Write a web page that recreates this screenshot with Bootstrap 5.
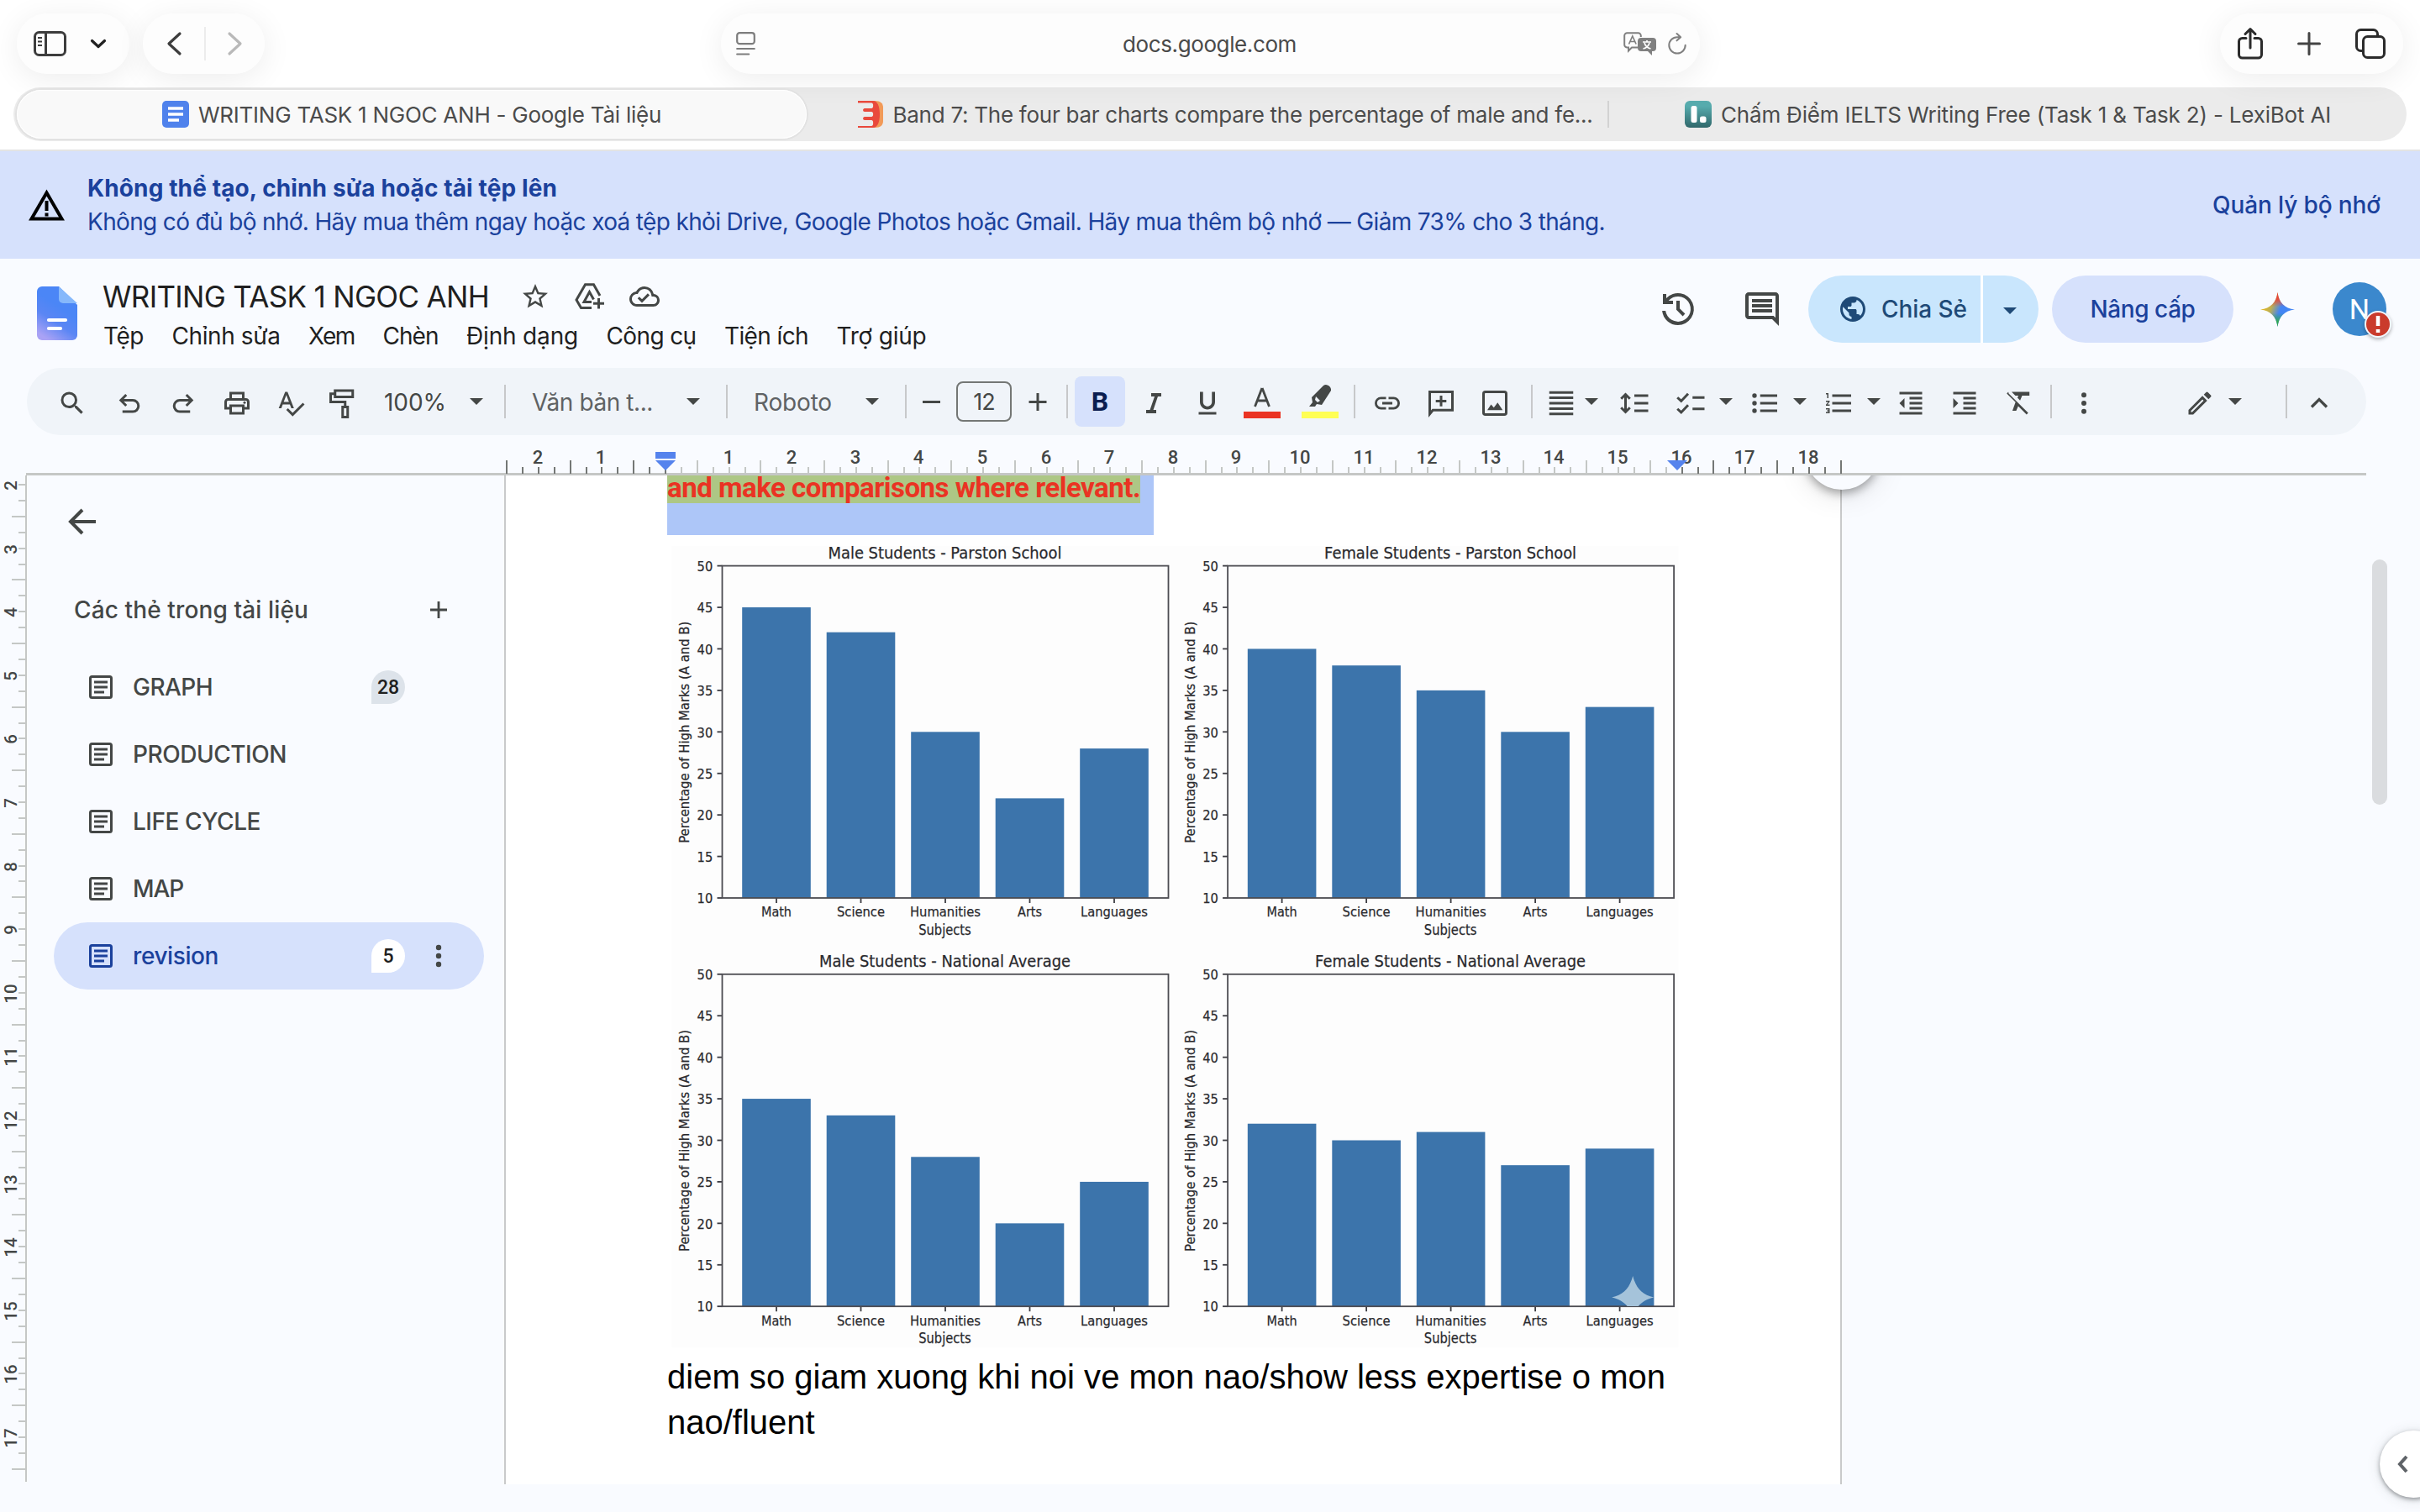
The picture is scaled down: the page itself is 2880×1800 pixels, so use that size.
<!DOCTYPE html>
<html lang="vi">
<head>
  <meta charset="UTF-8" />
  <meta name="viewport" content="width=device-width, initial-scale=1.0"/>
  <title>WRITING TASK 1 NGOC ANH - Google Tài liệu</title>
  <link href="https://cdn.jsdelivr.net/npm/bootstrap@5.3.2/dist/css/bootstrap.min.css" rel="stylesheet">
  <style>
    body { width: 2880px; height: 1800px; overflow: hidden; background: #f9fbff; color: #1f1f1f; font-family: Inter, Roboto, sans-serif; font-size: 28px; line-height: 1; }
    svg { display: block; flex: none; overflow: visible; }
    [data-w] { white-space: nowrap; flex: none; }
    .half-bold { font-weight: 500; }

    /* Safari */
    .chrome { height: 180px; background: #fff; border-bottom: 2px solid #e3e4e4; }
    .bar-top { height: 104px; padding: 16px 20px 16px; }
    .pill { height: 72px; background: #fdfdfd; border-radius: 36px; box-shadow: 0 6px 36px rgba(0,0,0,.075), inset 0 0 2px #fff; color: #2b2b2b; }
    .pill-side { width: 134px; padding: 0 28px 0 20px; }
    .pill-nav { width: 145px; padding: 0 27px 0 29px; margin-left: 16px; }
    .pill-nav i { width: 2px; height: 40px; background: #ececec; }
    .pill-url { width: 1165px; margin-left: 543px; padding: 0 15px 0 18px; color: #4a4a4a; font-size: 26px; }
    .pill-url span { padding-top: 2px; }
    .pill-right { width: 218px; margin-left: 619px; padding: 0 21px; }
    .tab-strip { height: 64px; margin: 0 16px; border-radius: 32px; background: #ebebeb; padding: 0 0 0 4px; font-size: 26px; color: #4b4b4b; }
    .tab-strip span { padding-top: 2px; }
    .tab-one { width: 940px; height: 58px; border-radius: 29px; background: #f9f9f9; box-shadow: 0 0 0 2px #e2e2e2, inset 0 0 0 1px #fff; gap: 11px; }
    .tab-two { width: 955px; gap: 12px; padding-left: 43px; height: 32px; border-right: 2px solid #d2d2d2; }
    .tab-three { width: 949px; gap: 11px; }

    /* thông báo bộ nhớ */
    .notice { height: 128px; background: #d6e1fc; color: #1b419c; padding: 0 47px 0 34px; }
    .notice-text { margin-left: 27px; gap: 12px; }

    /* đầu trang */
    .docs-head { height: 130px; padding: 0 40px 0 44px; }
    .head-names { padding-top: 23px; margin-left: 30px; }
    .doc-title { font-size: 35px; gap: 29px; height: 44px; color: #1f1f1f; }
    .menu-row { gap: 33.5px; height: 34px; margin-top: 8px; margin-left: 1px; }
    .head-right { height: 120px; }
    .icon-dark { color: #444746; }
    .share { height: 80px; width: 274px; border-radius: 40px; background: #c9e6fd; color: #1f4a77; margin-left: 31px; }
    .share-main { width: 208px; height: 80px; padding-left: 38px; gap: 19px; border-right: 3px solid #fff; }
    .share-more { width: 66px; padding-left: 24px; }
    .upgrade { width: 216px; height: 80px; border-radius: 40px; background: #d6e1fc; color: #1b419c; margin-left: 16px; }
    .avatar { width: 64px; height: 64px; border-radius: 50%; background: #3b88cd; color: #fff; font: 34px Roboto, sans-serif; position: relative; margin-left: 45px; }
    .avatar-alert { position: absolute; left: 38px; top: 34px; width: 32px; height: 32px; border-radius: 50%; border: 2px solid #f2f6fc; background: #ca3b2c; box-shadow: 0 2px 4px rgba(0,0,0,.3); }

    /* thanh công cụ */
    .tools { height: 80px; margin: 0 64px 0 32px; border-radius: 40px; background: #f0f4f9; padding: 0 38px 0 8px; color: #444746; }
    .tools > * { margin-left: 28px; flex: none; }
    .tools > span { padding-top: 2px; }
    .tools svg.ic { width: 36px; height: 36px; margin-top: 4px; }
    .tools .dv { width: 2px; height: 40px; background: #c7c8ca; }
    .caret { width: 16px; height: 8px; background: currentColor; clip-path: polygon(0 0, 100% 0, 50% 100%); }
    .muted { color: #5f6264; }
    .size-box { width: 66px; height: 48px; border: 2px solid #747775; border-radius: 8px; font-size: 27px; letter-spacing: -1px; }
    .bold-on { width: 60px; height: 60px; border-radius: 8px; background: #d6e1fc; color: #0b1d4f; font: 700 32px Roboto, sans-serif; }
    .tools .g8 { margin-left: 8px; }   .tools .g10 { margin-left: 10px; }
    .tools .g13 { margin-left: 13px; } .tools .g16 { margin-left: 16px; }
    .tools .g18 { margin-left: 18px; } .tools .g20 { margin-left: 20px; }
    .tools .g25 { margin-left: 25px; } .tools .g31 { margin-left: 31px; }
    .tools .g32 { margin-left: 32px; } .tools .g40 { margin-left: 40px; }
    .tools .g52 { margin-left: 52px; }

    /* thước và vùng soạn thảo */
    .ruler-h { height: 48px; margin: 0 64px 0 31px; border-bottom: 3px solid #c5c7c6; }
    svg text { font-family: Roboto, sans-serif; }
    .ruler-h text, .ruler-v text { font-weight: 500; fill: #444746; text-anchor: middle; }
    .ruler-h text { font-size: 22px; }
    .ruler-v text { font-size: 20.5px; }
    .work { height: 1234px; position: relative; }
    .ruler-v { width: 32px; height: 1198px; border-right: 2px solid #c5c7c6; }
    .outline { width: 568px; color: #444746; font-weight: 500; }
    .outline-back { padding: 38px 0 0 48px; height: 128px; }
    .outline-head { height: 64px; padding: 0 44px 0 56px; }
    .outline-plus { margin-right: 24px; }
    .outline-list { padding: 20px 24px 0 32px; }
    .outline-item { height: 80px; border-radius: 40px; padding: 0 50px 0 42px; }
    .outline-item.on { background: #d6e1fc; color: #1b419c; }
    .outline-item svg { margin-right: 24px; }
    .count { width: 40px; height: 40px; border-radius: 20px 20px 20px 0; background: #dde3ea; color: #1f1f1f; font: 500 23px Roboto, sans-serif; margin-left: auto; margin-right: 44px; }
    .on .count { background: #fff; margin-right: 36px; }
    .outline-item.on svg.dots { margin-right: 0; color: #444746; }
    .paper { width: 1592px; height: 1201px; background: #fff; border: solid #c9cacb; border-width: 0 2px; padding-left: 192px; overflow: hidden; }
    .sel { width: 579px; height: 71px; background: #adc6f8; }
    .sel span { display: block; width: 563px; height: 33px; background: #adc785; color: #ea3323; font: 700 33px/29px Roboto, sans-serif; }
    .figure-box { width: 1206px; height: 976px; }
    .figure-box text { font-family: "DejaVu Sans", sans-serif; fill: #2a2a2e; stroke: #2a2a2e; stroke-width: .25; }
    .note-text { font: 40px/53.7px "Liberation Sans", Arial, sans-serif; color: #000; }
    .peek { position: absolute; left: 2051px; top: 0; width: 280px; height: 90px; overflow: hidden; }
    .peek span { position: absolute; left: 97px; top: -71px; width: 88px; height: 88px; border-radius: 50%; background: #f9fbff; box-shadow: 0 4px 12px rgba(0,0,0,.35), 0 4px 36px rgba(0,0,0,.13); }
    .scroll-thumb { width: 18px; height: 292px; margin: 100px 0 0 631px; border-radius: 9px; background: #dadcdf; }
    .side-tab { position: absolute; left: 2832px; top: 1137px; width: 80px; height: 80px; border-radius: 40px; background: #fff; box-shadow: 0 2px 5px rgba(60,64,67,.5), 0 2px 16px rgba(60,64,67,.15); padding-left: 19px; color: #5f6368; }
  </style>
</head>
<body class="d-flex flex-column">

  <header class="chrome flex-shrink-0">
    <div class="bar-top d-flex">
      <div class="pill pill-side d-flex align-items-center justify-content-between">
        <svg width="39" height="30" viewBox="0 0 39 30" fill="none" stroke="#3d3d3d" stroke-width="3"><rect x="1.5" y="1.5" width="36" height="27" rx="5"/><path d="M14.5 2v26"/><path d="M5 8h5M5 12.500h5M5 17h5" stroke-width="2"/></svg>
        <svg width="18" height="10" viewBox="0 0 18 10" fill="none" stroke="#222" stroke-width="3.200" stroke-linecap="round" stroke-linejoin="round"><path d="M1.500 1.500L9 8.500l7.500-7"/></svg>
      </div>
      <div class="pill pill-nav d-flex align-items-center justify-content-between">
        <svg width="17" height="28" viewBox="0 0 17 28" fill="none" stroke="#3d3d3d" stroke-width="3.200" stroke-linecap="round" stroke-linejoin="round"><path d="M15 2L2 14l13 12"/></svg>
        <i></i>
        <svg width="17" height="28" viewBox="0 0 17 28" fill="none" stroke="#b9b9b9" stroke-width="3.200" stroke-linecap="round" stroke-linejoin="round"><path d="M2 2l13 12L2 26"/></svg>
      </div>
      <div class="pill pill-url d-flex align-items-center">
        <svg width="23" height="28" viewBox="0 0 23 28" fill="none" stroke="#7d7d7d" stroke-width="2.200" stroke-linecap="round"><rect x="1.200" y="1.200" width="20.600" height="13" rx="3"/><path d="M1.200 20h20.600M1.200 26.500h14"/></svg>
        <span class="mx-auto ps-5" data-w="207">docs.google.com</span>
        <svg width="40" height="28" viewBox="0 0 40 28"><path d="M17 18.500h-7l-4 4v-4H4.500a3.300 3.300 0 0 1-3.300-3.300V4.500a3.300 3.300 0 0 1 3.300-3.300h13a3.300 3.300 0 0 1 3.300 3.300V6" fill="none" stroke="#808080" stroke-width="2"/><path d="M21 7h14a4 4 0 0 1 4 4v8a4 4 0 0 1-4 4h-1v5l-5-5h-8a4 4 0 0 1-4-4v-8a4 4 0 0 1 4-4z" fill="#808080"/><path d="M6.500 14.500L10.800 5l4.300 9.500M8 11.500h5.500" fill="none" stroke="#808080" stroke-width="1.700"/><path d="M23 12h10M28 10v2M25 13c1 4 4 6 7.500 7M31 13c-1 4-4 6-7.500 7" stroke="#fff" stroke-width="1.700" fill="none"/></svg>
        <svg class="ms-2 ps-1" width="28" height="28" viewBox="0 0 26 28" fill="none" stroke="#808080" stroke-width="2.200" stroke-linecap="round" stroke-linejoin="round"><path d="M23.500 16A10.500 10.500 0 1 1 13 5.500h4M12.500 1L17.500 5.500 12.500 10"/></svg>
      </div>
      <div class="pill pill-right d-flex align-items-center justify-content-between">
        <svg width="30" height="38" viewBox="0 0 30 38" fill="none" stroke="currentColor" stroke-width="3" stroke-linecap="round" stroke-linejoin="round"><path d="M10 12.500H5.500a4 4 0 0 0-4 4V32a4 4 0 0 0 4 4h19a4 4 0 0 0 4-4V16.500a4 4 0 0 0-4-4H20M15 24V2M9 7.500L15 1.500l6 6"/></svg>
        <svg width="28" height="28" viewBox="0 0 28 28" stroke="#444" stroke-width="3" stroke-linecap="round"><path d="M14 1.500v25M1.500 14h25"/></svg>
        <svg width="36" height="36" viewBox="0 0 36 36" fill="none" stroke="currentColor" stroke-width="3"><rect x="9.500" y="9.500" width="25" height="25" rx="5"/><path d="M9 26.500H6.500a5 5 0 0 1-5-5v-15a5 5 0 0 1 5-5h15a5 5 0 0 1 5 5V9"/></svg>
      </div>
    </div>
    <div class="tab-strip d-flex align-items-center">
      <div class="tab-one d-flex align-items-center justify-content-center">
        <svg width="32" height="32" viewBox="0 0 32 32"><rect width="32" height="32" rx="5" fill="#4f82ec"/><path d="M7 9h18M7 16h18M7 23h13" stroke="#fff" stroke-width="3.600"/></svg>
        <span data-w="551">WRITING TASK 1 NGOC ANH - Google Tài liệu</span>
      </div>
      <div class="tab-two d-flex align-items-center justify-content-center">
        <svg width="30" height="32" viewBox="0 0 30 32"><path d="M18 0h2c7 0 10 3 10 8v16c0 5-3 8-10 8h-2z" fill="#f29a58"/><path d="M0 0h18c5 0 8 6 8 16s-3 16-8 16H0v-2h16c3 0 3-7 0-7H8c-2.500 0-2.500-4 0-4h8c3 0 3-6 0-6H8c-2.500 0-2.500-4 0-4h8c3 0 3-6.500 0-6.500H0z" fill="#e9493c"/></svg>
        <span data-w="833">Band 7: The four bar charts compare the percentage of male and fe...</span>
      </div>
      <div class="tab-three d-flex align-items-center justify-content-center">
        <svg width="32" height="32" viewBox="0 0 32 32"><defs><linearGradient id="lx" x2="0" y2="1"><stop offset=".2" stop-color="#56abad"/><stop offset="1" stop-color="#30686b"/></linearGradient></defs><rect width="32" height="32" rx="6" fill="url(#lx)"/><rect x="7.500" y="6" width="7" height="20" rx="2.500" fill="#fff"/><rect x="18" y="18.500" width="7.500" height="7.500" rx="2.500" fill="#fff"/></svg>
        <span data-w="726">Chấm Điểm IELTS Writing Free (Task 1 &amp; Task 2) - LexiBot AI</span>
      </div>
    </div>
  </header>

  <section class="notice d-flex align-items-center flex-shrink-0">
    <svg width="43" height="38" viewBox="0 0 43 38"><path d="M21.500 4.500L39.500 35.500H3.500z" fill="none" stroke="#000" stroke-width="4"/><path d="M21.500 14v12M21.500 28.500v4" stroke="#000" stroke-width="4"/></svg>
    <div class="notice-text d-flex flex-column">
      <div><strong data-w="559">Không thể tạo, chỉnh sửa hoặc tải tệp lên</strong></div>
      <div><span data-w="1806">Không có đủ bộ nhớ. Hãy mua thêm ngay hoặc xoá tệp khỏi Drive, Google Photos hoặc Gmail. Hãy mua thêm bộ nhớ — Giảm 73% cho 3 tháng.</span></div>
    </div>
    <span class="ms-auto half-bold" data-w="200">Quản lý bộ nhớ</span>
  </section>

  <section class="docs-head d-flex flex-shrink-0">
    <svg class="mt-auto mb-auto" width="48" height="64" viewBox="0 0 48 64"><defs><linearGradient id="dg" x1=".6" y1=".4" x2=".3" y2="1"><stop offset="0" stop-color="#4b86f6"/><stop offset=".45" stop-color="#5b86f4"/><stop offset="1" stop-color="#a9a2f5"/></linearGradient></defs><path d="M6 0h20l22 22v36a6 6 0 0 1-6 6H6a6 6 0 0 1-6-6V6a6 6 0 0 1 6-6z" fill="url(#dg)"/><path d="M26 0l22 20H31a5 5 0 0 1-5-5z" fill="#86b8fb"/><path d="M14 40h20M14 50h14" stroke="#fff" stroke-width="4.200" stroke-linecap="round"/></svg>
    <div class="head-names">
      <div class="doc-title d-flex align-items-center">
        <span data-w="460">WRITING TASK 1 NGOC ANH</span>
        <svg class="icon-dark ms-2" width="36" height="36" viewBox="0 0 24 24" fill="currentColor"><path d="M22 9.240l-7.190-.62L12 2 9.190 8.630 2 9.240l5.460 4.730L5.820 21 12 17.270 18.180 21l-1.630-7.030L22 9.240zM12 15.400l-3.760 2.270 1-4.280-3.320-2.880 4.380-.38L12 6.100l1.710 4.040 4.380.38-3.320 2.880 1 4.280L12 15.400z"/></svg>
        <svg class="icon-dark" width="36" height="32" viewBox="0 0 36 32" fill="none" stroke="currentColor" stroke-width="3"><path d="M20 29.500H7.500L2 20 12.500 1.800h10L30 15"/><path d="M20 22.500H11l6.500-12 5 9"/><path d="M28.500 18v12.500M22 24.300h13"/></svg>
        <svg class="icon-dark" width="36" height="36" viewBox="0 0 24 24" fill="currentColor"><path d="M19.350 10.040A7.490 7.490 0 0 0 12 4C9.110 4 6.600 5.640 5.350 8.040A5.994 5.994 0 0 0 0 14c0 3.310 2.690 6 6 6h13c2.760 0 5-2.240 5-5 0-2.640-2.050-4.780-4.650-4.960zM19 18H6c-2.210 0-4-1.790-4-4 0-2.050 1.530-3.760 3.560-3.970l1.070-.11.500-.95A5.469 5.469 0 0 1 12 6c2.620 0 4.880 1.860 5.390 4.430l.3 1.500 1.530.11A2.980 2.980 0 0 1 22 15c0 1.650-1.350 3-3 3zm-9-3.820l-2.090-2.090L6.500 13.500 10 17l6.010-6.010-1.410-1.410z"/></svg>
      </div>
      <nav class="menu-row d-flex align-items-center">
        <span data-w="48">Tệp</span><span data-w="129">Chỉnh sửa</span><span data-w="55">Xem</span><span data-w="66">Chèn</span><span data-w="133">Định dạng</span><span data-w="107">Công cụ</span><span data-w="100">Tiện ích</span><span data-w="107">Trợ giúp</span>
      </nav>
    </div>
    <div class="head-right ms-auto d-flex align-items-center">
      <svg class="icon-dark" width="48" height="48" viewBox="0 0 24 24" fill="currentColor"><path d="M12 21.500a9.500 9.500 0 0 1-9.450-8.500h2.020A7.500 7.500 0 1 0 6.350 7H9v2H3V3h2v2.500A9.500 9.500 0 1 1 12 21.500zm2.800-5.300L11 12.400V7h2v4.600l3.200 3.200z"/></svg>
      <svg class="icon-dark ms-5 ps-1" width="52" height="48" viewBox="0 0 24 24" fill="currentColor"><path d="M21.990 4c0-1.100-.89-2-1.990-2H4c-1.100 0-2 .9-2 2v12c0 1.100.9 2 2 2h14l4 4-.01-18zM20 4v13.170L18.830 16H4V4h16zM6 12h12v2H6zm0-3h12v2H6zm0-3h12v2H6z"/></svg>
      <div class="share d-flex align-items-center">
        <div class="share-main d-flex align-items-center">
          <svg width="30" height="30" viewBox="2 2 20 20" fill="currentColor"><path d="M12 2C6.480 2 2 6.480 2 12s4.480 10 10 10 10-4.480 10-10S17.520 2 12 2zm-1 17.930c-3.950-.49-7-3.850-7-7.930 0-.62.08-1.210.21-1.790L9 15v1c0 1.100.9 2 2 2v1.930zm6.900-2.540c-.26-.81-1-1.390-1.900-1.390h-1v-3c0-.55-.45-1-1-1H8v-2h2c.55 0 1-.45 1-1V7h2c1.100 0 2-.9 2-2v-.41c2.930 1.190 5 4.060 5 7.410 0 2.080-.8 3.970-2.100 5.390z"/></svg>
          <span class="half-bold" data-w="102">Chia Sẻ</span>
        </div>
        <div class="share-more"><div class="caret mt-1"></div></div>
      </div>
      <div class="upgrade d-flex align-items-center justify-content-center"><span class="half-bold" data-w="125">Nâng cấp</span></div>
      <svg class="ms-4 ps-2" width="49" height="41" viewBox="0 0 40 40"><defs><linearGradient id="gm1" x1="0" y1=".2" x2="1" y2=".6"><stop offset="0" stop-color="#fbbc04"/><stop offset=".35" stop-color="#c0b050"/><stop offset=".6" stop-color="#4285f4"/><stop offset="1" stop-color="#4285f4"/></linearGradient><linearGradient id="gm2" x1="0" y1="0" x2="0" y2="1"><stop offset="0" stop-color="#ea4335"/><stop offset=".2" stop-color="#ea4335" stop-opacity=".9"/><stop offset=".42" stop-color="#ea4335" stop-opacity="0"/><stop offset=".6" stop-color="#34a853" stop-opacity="0"/><stop offset=".85" stop-color="#34a853"/></linearGradient></defs><path d="M20 0c1.500 12 8 18.500 20 20-12 1.500-18.500 8-20 20-1.500-12-8-18.500-20-20 12-1.500 18.500-8 20-20z" fill="url(#gm1)"/><path d="M20 0c1.500 12 8 18.500 20 20-12 1.500-18.500 8-20 20-1.500-12-8-18.500-20-20 12-1.500 18.500-8 20-20z" fill="url(#gm2)"/></svg>
      <div class="avatar d-flex align-items-center justify-content-center">N
        <div class="avatar-alert"><svg width="28" height="28" viewBox="0 0 28 28"><path d="M14 4v12M14 20v4" stroke="#fff" stroke-width="4.500"/></svg></div>
      </div>
    </div>
  </section>

  <section class="tools d-flex align-items-center flex-shrink-0">
    <svg class="ic" viewBox="0 0 24 24" fill="currentColor"><path d="M15.500 14h-.79l-.28-.27A6.471 6.471 0 0 0 16 9.500 6.500 6.500 0 1 0 9.500 16c1.610 0 3.090-.59 4.230-1.570l.27.28v.79l5 4.990L20.490 19l-4.990-5zm-6 0C7.010 14 5 11.990 5 9.500S7.010 5 9.500 5 14 7.010 14 9.500 11.990 14 9.500 14z"/></svg>
    <svg class="ic g32" viewBox="0 0 24 24" fill="none" stroke="currentColor" stroke-width="2"><path d="M6.500 18.700h8.200a4.500 4.500 0 0 0 0-9H5.500M9.500 5.300L5.200 9.700l4.300 4.300"/></svg>
    <svg class="ic" viewBox="0 0 24 24" fill="none" stroke="currentColor" stroke-width="2"><path d="M17.500 18.700H9.300a4.500 4.500 0 0 1 0-9h9.200M14.500 5.300l4.300 4.400-4.300 4.300"/></svg>
    <svg class="ic" viewBox="0 0 24 24" fill="currentColor"><path d="M19 8h-1V3H6v5H5c-1.660 0-3 1.340-3 3v6h4v4h12v-4h4v-6c0-1.660-1.340-3-3-3zM8 5h8v3H8V5zm8 12v2H8v-4h8v2zm2-2v-2H6v2H4v-4c0-.55.45-1 1-1h14c.55 0 1 .45 1 1v4h-2z"/><circle cx="18" cy="11.500" r="1"/></svg>
    <svg class="ic" viewBox="0 0 24 24" fill="currentColor"><path d="M12.450 16h2.090L9.430 3H7.570L2.460 16h2.090l1.120-3h5.640l1.140 3zm-6.020-5L8.500 5.480 10.570 11H6.430zm15.160.590l-8.090 8.090L9.830 16l-1.410 1.410 5.090 5.090L23 13l-1.410-1.410z"/></svg>
    <svg class="ic g25" viewBox="0 0 24 24" fill="none" stroke="currentColor" stroke-width="2"><path d="M6.500 2h14v5h-14zM6.500 4.500H3V11h11.500v4M12.500 15h4v8h-4z"/></svg>
    <span class="g32" data-w="74">100%</span>
    <div class="caret"></div>
    <div class="dv g25"></div>
    <span class="g31 muted" data-w="144">Văn bản t...</span>
    <div class="caret g40"></div>
    <div class="dv g31"></div>
    <span class="g31 muted" data-w="93">Roboto</span>
    <div class="caret g40"></div>
    <div class="dv g31"></div>
    <svg class="ic g13" viewBox="0 0 24 24" stroke="currentColor" stroke-width="2"><path d="M4 11h14"/></svg>
    <div class="size-box g10 d-flex align-items-center justify-content-center">12</div>
    <svg class="ic g13" viewBox="0 0 24 24" stroke="currentColor" stroke-width="2"><path d="M5 11h14M12 4v14"/></svg>
    <div class="dv g16"></div>
    <div class="bold-on g8 d-flex align-items-center justify-content-center">B</div>
    <svg class="ic g16" viewBox="0 0 24 24" fill="currentColor"><path d="M10 4v2.700h2.700L9 17.300H6V20h8v-2.700h-2.300L15.300 6.700H18V4z"/></svg>
    <svg class="ic" viewBox="0 0 24 24" fill="currentColor"><path d="M12 17c3.310 0 6-2.690 6-6V3h-2.500v8c0 1.930-1.570 3.500-3.500 3.500S8.500 12.930 8.500 11V3H6v8c0 3.310 2.690 6 6 6zm-7 2v2h14v-2H5z"/></svg>
    <svg class="g25" width="44" height="46" viewBox="0 -2 44 46"><path d="M21.900 5L13.500 27M22.100 5L30.500 27M16.500 20h11" stroke="#444746" stroke-width="2.800"/><path d="M0 33h44v8H0z" fill="#ea3323"/></svg>
    <svg class="g25" width="44" height="46" viewBox="0 -2 44 46"><path d="M9 27l4-5-1-6L26 2c4-3 10 2 9 6L24 25l-6-1-2 3z" fill="#444746"/><path d="M17 15l5 5-3 2-3-3z" fill="#f0f4f9"/><path d="M0 33h44v8H0z" fill="#ffff54"/></svg>
    <div class="dv g18"></div>
    <svg class="ic g20" viewBox="0 0 24 24" fill="currentColor"><path d="M3.900 12c0-1.710 1.390-3.100 3.100-3.100h4V7H7a5 5 0 0 0 0 10h4v-1.900H7c-1.710 0-3.100-1.390-3.100-3.100zM8 13h8v-2H8v2zm9-6h-4v1.900h4a3.100 3.100 0 0 1 0 6.200h-4V17h4a5 5 0 0 0 0-10z"/></svg>
    <svg class="ic" viewBox="0 0 24 24" fill="none" stroke="currentColor" stroke-width="2"><path d="M3 20.500V3h18v14.500H5.500z"/><path d="M12 6v8.500M7.800 10.300h8.400"/></svg>
    <svg class="ic" viewBox="0 0 24 24" fill="none" stroke="currentColor" stroke-width="2"><rect x="3" y="3" width="18" height="18" rx="1.500"/><path d="M6 17.500l3-4.500 2.200 2.500 3-4 4 6z" fill="currentColor" stroke="none"/></svg>
    <div class="dv g25"></div>
    <svg class="ic g16" viewBox="0 0 24 24" stroke="currentColor" stroke-width="2"><path d="M2.500 3.500h19M2.500 7.700h19M2.500 12h19M2.500 16.300h19M2.500 20.500h19"/></svg>
    <div class="caret g10"></div>
    <svg class="ic g25" viewBox="0 0 24 24" fill="none" stroke="currentColor" stroke-width="2"><path d="M12 6h11M12 12h11M12 18h11M5 5v14M1.500 8.500L5 5l3.500 3.500M1.500 15.500L5 19l3.500-3.500"/></svg>
    <svg class="ic g31" viewBox="0 0 24 24" fill="none" stroke="currentColor" stroke-width="2"><path d="M13.500 7.500H23M13.500 16.500H23M1.500 7.500L4.500 10.300 10 4.500M1.500 16.500L4.500 19.300 10 13.500"/></svg>
    <div class="caret g16"></div>
    <svg class="ic g20" viewBox="0 0 24 24" fill="currentColor" stroke="currentColor" stroke-width="2"><path d="M8.500 6H22M8.500 12H22M8.500 18H22"/><circle cx="4" cy="6" r=".8"/><circle cx="4" cy="12" r=".8"/><circle cx="4" cy="18" r=".8"/></svg>
    <div class="caret g16"></div>
    <svg class="ic g20" viewBox="0 0 24 24" fill="currentColor"><path d="M2 17h2v.5H3v1h1v.5H2v1h3v-4H2v1zm1-9h1V4H2v1h1v3zm-1 3h1.800L2 13.100v.9h3v-1H3.200L5 10.900V10H2v1zm5-6v2h15V5H7zm0 14h15v-2H7v2zm0-6h15v-2H7v2z"/></svg>
    <div class="caret g16"></div>
    <svg class="ic g18" viewBox="0 0 24 24" fill="currentColor"><path d="M11 17h10v-2H11v2zm-8-5l4 4V8l-4 4zm0 9h18v-2H3v2zM3 3v2h18V3H3zm8 6h10V7H11v2zm0 4h10v-2H11v2z"/></svg>
    <svg class="ic" viewBox="0 0 24 24" fill="currentColor"><path d="M3 21h18v-2H3v2zM3 8v8l4-4-4-4zm8 9h10v-2H11v2zM3 3v2h18V3H3zm8 6h10V7H11v2zm0 4h10v-2H11v2z"/></svg>
    <svg class="ic" viewBox="0 0 24 24" fill="currentColor"><path d="M3.270 4L2 5.270l6.970 6.970L6.500 19h3l1.570-3.660L17.730 22 19 20.730 3.550 5.270 3.270 4zM6 4v.18L8.820 7h2.400l-.72 1.680 2.100 2.100L14.210 7H20V4H6z" transform="translate(.8 -1)"/></svg>
    <div class="dv g20"></div>
    <svg class="ic g20" viewBox="0 0 24 24" fill="currentColor"><circle cx="12" cy="5.500" r="2"/><circle cx="12" cy="12" r="2"/><circle cx="12" cy="18.500" r="2"/></svg>
    <svg class="ic ms-auto" viewBox="0 0 24 24" fill="currentColor"><path d="M3 17.250V21h3.750L17.810 9.940l-3.750-3.750L3 17.250zM5.920 19H5v-.92l9.060-9.060.92.920L5.920 19zM20.710 5.630l-2.340-2.340a1 1 0 0 0-1.410 0l-1.830 1.830 3.750 3.750 1.830-1.830a1 1 0 0 0 0-1.410z"/></svg>
    <div class="caret g16"></div>
    <div class="dv g52"></div>
    <svg class="ic g20" viewBox="0 0 24 24" fill="none" stroke="currentColor" stroke-width="2.200"><path d="M6 15l6-6 6 6"/></svg>
  </section>

  <div class="ruler-h flex-shrink-0"><svg id="rulerTop" width="2785" height="46"></svg></div>

  <main class="work d-flex flex-shrink-0">
    <div class="ruler-v flex-shrink-0"><svg id="rulerSide" width="30" height="1198"></svg></div>
    <aside class="outline flex-shrink-0">
      <div class="outline-back"><svg width="36" height="34" viewBox="0 0 36 34" fill="none" stroke="currentColor" stroke-width="4"><path d="M18 3L4 17l14 14M4 17h30"/></svg></div>
      <div class="outline-head d-flex align-items-center justify-content-between"><span data-w="279">Các thẻ trong tài liệu</span><svg class="outline-plus" width="20" height="20" viewBox="0 0 20 20" stroke="currentColor" stroke-width="2.800"><path d="M10 0v20M0 10h20"/></svg></div>
      <div class="outline-list" id="outlineList"></div>
    </aside>
    <article class="paper flex-shrink-0">
      <div class="sel"><span data-w="563">and make comparisons where relevant.</span></div>
      <div class="figure-box"><svg id="figure" width="1206" height="970" viewBox="794.500 637 1206 970"></svg></div>
      <div class="note-text"><span data-w="1188">diem so giam xuong khi noi ve mon nao/show less expertise o mon</span><br>nao/fluent</div>
    </article>
    <div class="scroll-thumb flex-shrink-0"></div>
    <div class="peek"><span></span></div>
    <div class="side-tab d-flex align-items-center"><svg width="16" height="22" viewBox="0 0 16 22" fill="none" stroke="currentColor" stroke-width="4"><path d="M13 2L5 11l8 9"/></svg></div>
  </main>

  <script src="https://cdn.jsdelivr.net/npm/bootstrap@5.3.2/dist/js/bootstrap.bundle.min.js"></script>
  <script>
    // danh sách thẻ
    const tabs = [
      { name: "GRAPH", w: 95, count: 28 },
      { name: "PRODUCTION", w: 183 },
      { name: "LIFE CYCLE", w: 152 },
      { name: "MAP", w: 60 },
      { name: "revision", w: 102, count: 5, on: true }
    ];
    document.getElementById("outlineList").innerHTML = tabs.map(t => `
      <div class="outline-item d-flex align-items-center ${t.on ? "on" : ""}">
        <svg width="28" height="28" viewBox="0 0 28 28" fill="none" stroke="currentColor" stroke-width="3"><rect x="1.5" y="1.5" width="25" height="25" rx="2"/><path d="M6 8h16M6 14h16M6 20h12" stroke-width="2.800"/></svg>
        <span data-w="${t.w}">${t.name}</span>
        ${t.count ? `<div class="count d-flex align-items-center justify-content-center">${t.count}</div>` : ""}
        ${t.on ? `<svg class="dots" width="8" height="28" viewBox="0 0 8 28" fill="currentColor"><circle cx="4" cy="4" r="3.200"/><circle cx="4" cy="14" r="3.200"/><circle cx="4" cy="24" r="3.200"/></svg>` : ""}
      </div>`).join("");

    // thước: 1 cm = 75.6px
    const CM = 75.6;
    let marks = "";
    for (let q = -10; q <= 74; q++) {
      const x = Math.round(761 + q * CM / 4);
      const half = Math.abs(q) % 4 === 2;
      const color = q <= 0 || q >= 64 ? "#747775" : "#c4c7c5";
      marks += `<path d="M${x} ${half ? 30 : 38}V46" stroke="${color}" stroke-width="2"/>`;
      if (q % 4 === 0 && q !== 0) marks += `<text x="${x - 1}" y="34">${Math.abs(q / 4)}</text>`;
    }
    marks += `<path d="M749 20h24v8h-24zM749 30h24l-12 12z" fill="#5583ed"/><path d="M1953 30h24l-12 12z" fill="#5583ed"/>`;
    document.getElementById("rulerTop").innerHTML = marks;

    let side = "";
    for (let q = 0; q <= 62; q++) {
      const y = Math.round(11 + q * CM / 4);
      side += `<path d="M${q % 4 === 2 ? 14 : 22} ${y}H30" stroke="#c4c7c5" stroke-width="2"/>`;
      if (q % 4 === 0) side += `<text transform="translate(19.5 ${y + 1}) rotate(-90)">${q / 4 + 2}</text>`;
    }
    document.getElementById("rulerSide").innerHTML = side;

    // biểu đồ cột
    const subjects = [["Math", 36], ["Science", 57], ["Humanities", 84], ["Arts", 29], ["Languages", 80]];
    const charts = [
      { title: "Male Students - Parston School", w: 278, x: 0, y: 0, data: [45, 42, 30, 22, 28] },
      { title: "Female Students - Parston School", w: 300, x: 601.6, y: 0, data: [40, 38, 35, 30, 33] },
      { title: "Male Students - National Average", w: 299, x: 0, y: 486.2, data: [35, 33, 28, 20, 25] },
      { title: "Female Students - National Average", w: 322, x: 601.6, y: 486.2, data: [32, 30, 31, 27, 29] }
    ];
    const label = (s, x, y, w, size, anchor = "middle", extra = "") =>
      `<text x="${x}" y="${y}" font-size="${size}" text-anchor="${anchor}" textLength="${w}" lengthAdjust="spacingAndGlyphs" ${extra}>${s}</text>`;
    const yOf = v => 1069 - (v - 10) * 9.885;
    let fig = `<path d="M800 650H1998V1604H800z" fill="#fdfdfd"/>`;
    charts.forEach(c => {
      fig += `<g transform="translate(${c.x} ${c.y})">`;
      fig += label(c.title, 1125, 664.5, c.w, 19.5);
      c.data.forEach((v, i) => {
        const x = 883.7 + i * 100.5;
        fig += `<rect x="${x}" y="${yOf(v)}" width="81.6" height="${1069 - yOf(v)}" fill="#3c74ab"/>`;
        fig += `<path d="M${x + 40.8} 1069v6" stroke="#3c3c42" stroke-width="1.800"/>`;
        fig += label(subjects[i][0], x + 40.8, 1091.4, subjects[i][1], 16.5);
      });
      for (let v = 10; v <= 50; v += 5) {
        fig += `<path d="M854 ${yOf(v)}h6" stroke="#3c3c42" stroke-width="1.800"/>`;
        fig += label(v, 848.7, yOf(v) + 6.2, 18.6, 16.5, "end");
      }
      fig += `<rect x="860" y="673.600" width="531" height="395.400" fill="none" stroke="#4c4c52" stroke-width="1.800"/>`;
      fig += label("Subjects", 1125, 1112.6, 62.5, 17);
      fig += label("Percentage of High Marks (A and B)", 0, 0, 264, 16.3, "middle", 'transform="translate(820.4 871.8) rotate(-90)"');
      fig += `</g>`;
    });
    fig += `<clipPath id="cut"><path d="M1900 1500h100v55h-100z"/></clipPath><path clip-path="url(#cut)" d="M1943.700 1519c4 15 11 22 25 25.500-14 3.500-21 10-25 25-4-15-11-21.500-25-25 14-3.500 21-10.500 25-25.500z" fill="#a5c3da"/>`;
    document.getElementById("figure").innerHTML = fig;

    // giãn chữ theo bề rộng data-w
    document.querySelectorAll("[data-w]").forEach(el => {
      const range = document.createRange();
      range.selectNodeContents(el);
      const natural = range.getBoundingClientRect().width;
      el.style.letterSpacing = (el.dataset.w - natural) / el.textContent.length + "px";
    });
  </script>
</body>
</html>
